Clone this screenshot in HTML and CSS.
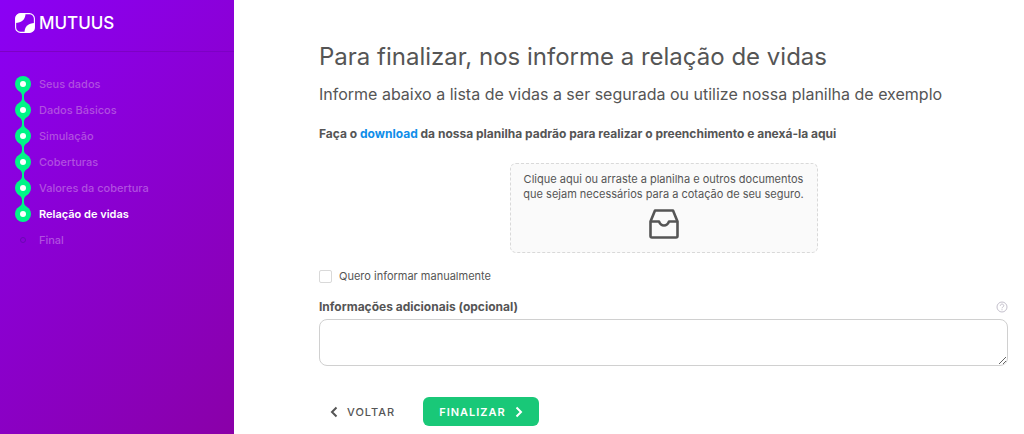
FILE: index.html
```html
<!DOCTYPE html>
<html lang="pt-BR">
<head>
  <meta charset="UTF-8">
  <meta name="viewport" content="width=device-width, initial-scale=1">
  <title>Mutuus - Relação de vidas</title>
  <link rel="stylesheet" href="styles.css">
</head>
<body>

  <svg class="symbols" aria-hidden="true">
    <symbol id="dot" viewBox="0 0 16 26">
      <circle cx="8" cy="13" r="8" fill="#00f587"/>
      <circle cx="8" cy="13" r="3" fill="#fff"/>
    </symbol>
    <symbol id="link-up" viewBox="0 0 16 26">
      <path d="M7 0h2v1c0 4 3 4 5.500 8H1.500C4 5 7 5 7 1z" fill="#00f587"/>
    </symbol>
    <symbol id="link-down" viewBox="0 0 16 26">
      <path d="M7 26h2v-1c0-4 3-4 5.500-8H1.500C4 21 7 21 7 25z" fill="#00f587"/>
    </symbol>
  </svg>

  <div class="page">
    <aside class="sidebar">
      <div class="brand">
        <svg class="brand-icon" viewBox="0 0 20 20" aria-hidden="true">
          <rect x=".6" y=".6" width="18.8" height="18.8" rx="5" fill="none" stroke="#fff" stroke-width="1.1"/>
          <path d="M5.500 .5H10.500C10.500 6.500 6.500 10 .5 10V5.500A5 5 0 0 1 5.500 .5z" fill="#fff"/>
          <path d="M14.500 19.500H9.500C9.500 13.500 13.500 10 19.500 10v4.500a5 5 0 0 1-5 5z" fill="#fff"/>
        </svg>
        <span class="brand-name">MUTUUS</span>
      </div>

      <ol class="steps">
        <li class="step"><svg class="step-icon"><use href="#link-down"/><use href="#dot"/></svg>Seus dados</li>
        <li class="step"><svg class="step-icon"><use href="#link-up"/><use href="#link-down"/><use href="#dot"/></svg>Dados Básicos</li>
        <li class="step"><svg class="step-icon"><use href="#link-up"/><use href="#link-down"/><use href="#dot"/></svg>Simulação</li>
        <li class="step"><svg class="step-icon"><use href="#link-up"/><use href="#link-down"/><use href="#dot"/></svg>Coberturas</li>
        <li class="step"><svg class="step-icon"><use href="#link-up"/><use href="#link-down"/><use href="#dot"/></svg>Valores da cobertura</li>
        <li class="step active" aria-current="step"><svg class="step-icon"><use href="#link-up"/><use href="#dot"/></svg>Relação de vidas</li>
        <li class="step"><svg class="step-icon"><circle cx="8" cy="13" r="2.500" fill="none" stroke="#6a08b4"/></svg>Final</li>
      </ol>
    </aside>

    <main class="content">
      <h1>Para finalizar, nos informe a relação de vidas</h1>
      <h2>Informe abaixo a lista de vidas a ser segurada ou utilize nossa planilha de exemplo</h2>
      <p class="hint">Faça o <a href="#">download</a> da nossa planilha padrão para realizar o preenchimento e anexá-la aqui</p>

      <form id="livesForm">
        <button type="button" class="dropzone">
          <span>Clique aqui ou arraste a planilha e outros documentos que sejam necessários para a cotação de seu seguro.</span>
          <svg class="inbox" viewBox="0 0 30 30" fill="none" stroke="#555" stroke-width="2.600" stroke-linejoin="round" aria-hidden="true">
            <path d="M1.500 12.500L6 1.500h18l4.500 11V27a1.500 1.500 0 0 1-1.500 1.500H3A1.500 1.500 0 0 1 1.500 27z"/>
            <path d="M1.500 12.500h8.500c1 2.500 2.500 4 5 4s4-1.500 5-4h8.500"/>
          </svg>
        </button>

        <label class="check">
          <input type="checkbox">
          Quero informar manualmente
        </label>

        <div class="label-row">
          <label for="info">Informações adicionais (opcional)</label>
          <svg class="help" viewBox="0 0 12 12" fill="none" stroke="#c4c0cc" aria-hidden="true">
            <circle cx="6" cy="6" r="5"/>
            <path d="M4.300 4.800c0-2.300 3.500-2.300 3.500 0C7.800 6 6 5.900 6 7.300M6 8.200v1.100"/>
          </svg>
        </div>
        <textarea id="info"></textarea>

        <div class="actions">
          <button type="button" class="btn">
            <svg class="arrow" viewBox="0 0 8 12" aria-hidden="true"><path d="M6.500 1.500L2 6l4.500 4.500"/></svg>
            VOLTAR
          </button>
          <button type="submit" class="btn btn-primary">
            FINALIZAR
            <svg class="arrow" viewBox="0 0 8 12" aria-hidden="true"><path d="M1.500 1.500L6 6l-4.500 4.500"/></svg>
          </button>
        </div>
      </form>
    </main>
  </div>

</body>
</html>
```

FILE: styles.css
```css
* {
  box-sizing: border-box;
}

body {
  margin: 0;
  font-family: Inter, "Open Sans", sans-serif;
  font-size: 11px;
  color: #555;
  background: #fff;
}

.symbols {
  display: none;
}

.page {
  display: flex;
  min-height: 100vh;
}

/* Sidebar */
.sidebar {
  flex: 0 0 234px;
  background: linear-gradient(135deg, #8b00f5 0%, #8a00a8 100%);
}

.brand {
  display: flex;
  align-items: center;
  gap: 4px;
  height: 52px;
  padding: 0 15px 6px;
  border-bottom: 1px solid #7d00c4;
  color: #fff;
}

.brand-icon {
  width: 20px;
  height: 20px;
}

.brand-name {
  font-size: 17px;
  font-weight: 500;
}

.steps {
  margin: 0;
  padding: 19px 15px;
  list-style: none;
}

.step {
  display: flex;
  align-items: center;
  gap: 8px;
  height: 26px;
  font-weight: 500;
  color: #b14fe0;
}

.step.active {
  color: #fff;
  font-weight: 600;
}

.step-icon {
  width: 16px;
  height: 26px;
}

/* Content */
.content {
  flex: 1;
  padding: 42px 16px 0 85px;
}

h1 {
  margin: 0;
  font-size: 24px;
  line-height: 30px;
  font-weight: 400;
}

h2 {
  margin: 11px 0 0;
  font-size: 16px;
  line-height: 22px;
  font-weight: 400;
}

.hint {
  margin: 21px 0;
  font-size: 12px;
  line-height: 16px;
  font-weight: 700;
}

.hint a {
  color: #108ee9;
  text-decoration: none;
}

.dropzone {
  display: flex;
  flex-direction: column;
  align-items: center;
  gap: 7px;
  width: 100%;
  max-width: 308px;
  margin: 0 auto;
  padding: 8px 8px 13px;
  border: 1px dashed #d9d9d9;
  border-radius: 6px;
  background: #fafafa;
  font: inherit;
  line-height: 15px;
  color: inherit;
  cursor: pointer;
}

.inbox {
  width: 30px;
  height: 30px;
}

.check {
  display: flex;
  align-items: center;
  gap: 7px;
  margin-top: 15px;
  line-height: 16px;
}

.check input {
  appearance: none;
  width: 13px;
  height: 13px;
  margin: 0;
  border: 1px solid #d9d9d9;
  border-radius: 2px;
}

.check input:checked {
  background: #19c878;
}

.label-row {
  display: flex;
  justify-content: space-between;
  align-items: center;
  margin-top: 15px;
  font-size: 12px;
  line-height: 16px;
  font-weight: 700;
}

.help {
  width: 12px;
  height: 12px;
}

textarea {
  display: block;
  width: 100%;
  height: 47px;
  margin-top: 4px;
  padding: 8px;
  border: 1px solid #d0d0d0;
  border-radius: 8px;
  font: inherit;
}

.actions {
  display: flex;
  gap: 13px;
  margin-top: 31px;
}

.btn {
  display: flex;
  align-items: center;
  gap: 9px;
  height: 29px;
  padding: 0 15px 0 11px;
  border: none;
  border-radius: 6px;
  background: none;
  font: inherit;
  font-weight: 500;
  letter-spacing: 1px;
  color: #555;
  cursor: pointer;
}

.btn-primary {
  padding: 0 16px;
  background: #19c878;
  color: #fff;
  font-weight: 600;
}

.arrow {
  width: 8px;
  height: 12px;
  fill: none;
  stroke: currentColor;
  stroke-width: 2;
}
```
